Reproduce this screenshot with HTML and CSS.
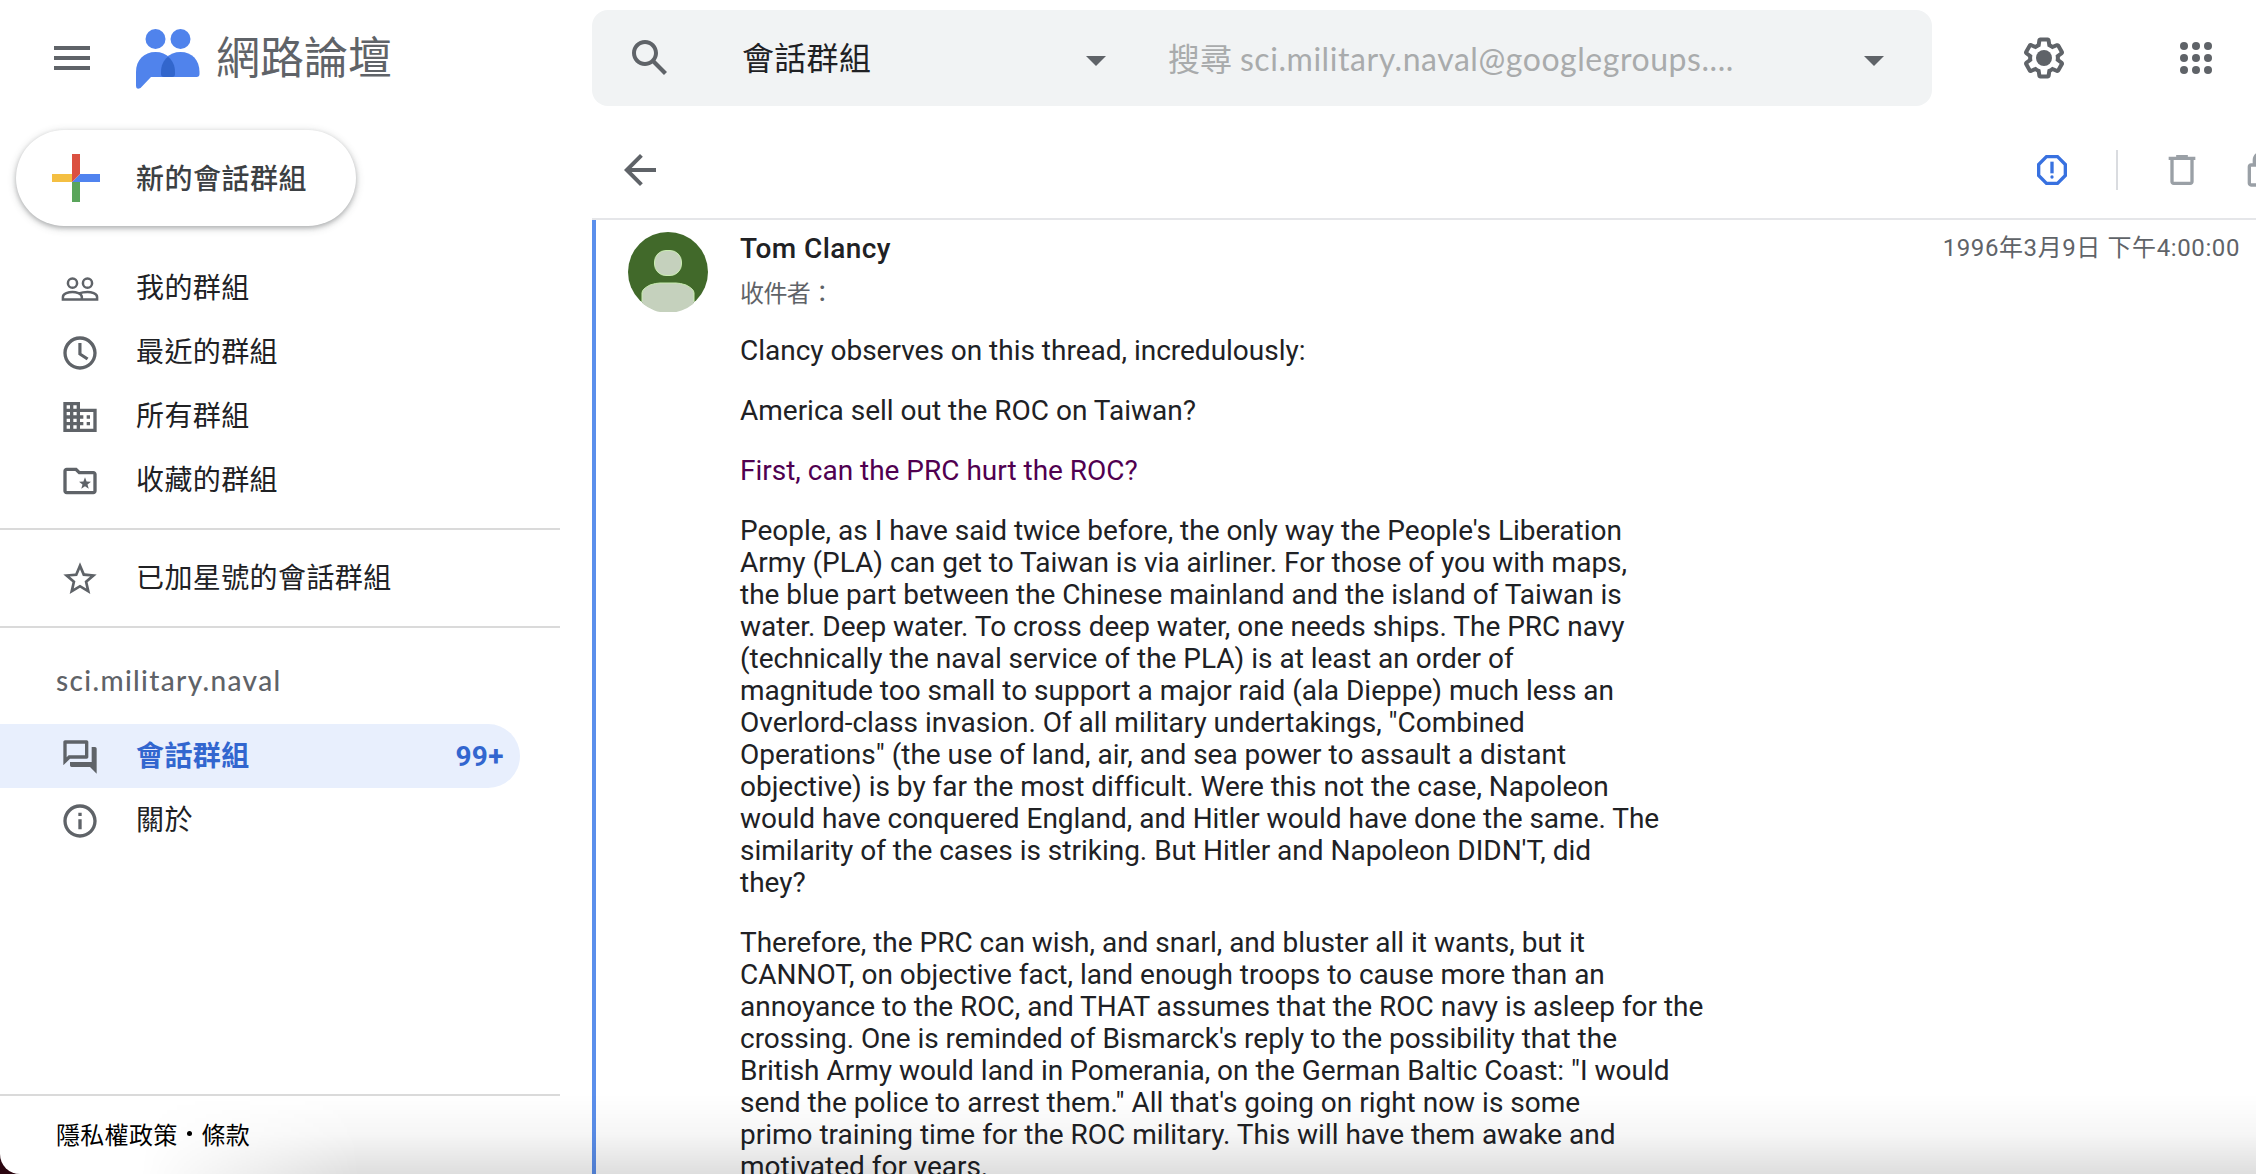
FILE: index.html
```html
<!DOCTYPE html>
<html lang="zh-Hant">
<head>
<meta charset="utf-8">
<title>網路論壇</title>
<link rel="stylesheet" href="styles.css">
</head>
<body>
<div class="app">
  <aside class="sidebar">
    <header class="brand">
      <svg class="icon48" viewBox="0 0 24 24"><path d="M3 18h18v-2H3v2zm0-5h18v-2H3v2zm0-7v2h18V6H3z"/></svg>
      <svg class="logo" viewBox="0 0 64 60">
        <circle cx="19.5" cy="10" r="10"/><circle cx="44.5" cy="10" r="10"/>
        <path d="M0 43C0 31 8 23 19.500 23S39 31 39 43v2q0 3-3 3H15L4.500 59Q0 61 0 57z"/>
        <path d="M25 43C25 31 33 23 44.500 23S63.500 31 63.500 43v2q0 3-3 3H28q-3 0-3-3z"/>
        <path class="overlap" d="M32 27.800C37 32 39 37 39 43v2q0 3-3 3h-8q-3 0-3-3v-2c0-6 2-11 7-15.200z"/>
      </svg>
      <h1 class="title">網路論壇</h1>
    </header>
    <button class="compose">
      <svg class="plus" viewBox="0 0 48 48">
        <path fill="#f4bf42" d="M0 20h20v8H0z"/><path fill="#5aa55b" d="M20 28h8v20h-8z"/>
        <path fill="#5083ef" d="M28 20h20v8H20z"/><path fill="#db5040" d="M20 0h8v20l-8 8z"/>
      </svg>
      <span>新的會話群組</span>
    </button>
    <nav class="nav">
      <a class="item"><svg class="icon40" viewBox="0 0 24 24"><g fill="none" stroke="#5f6368" stroke-width="1.500"><circle cx="7.500" cy="8.500" r="2.750"/><circle cx="16.500" cy="8.500" r="2.750"/><path d="M1.750 18.250v-1.500c0-2 3.500-3 5.750-3 2 0 5.600 1 5.600 3v1.500zM11.500 14.600c1.500-.6 3.500-.85 5-.85 2.250 0 5.750 1 5.750 3v1.500h-9.500"/></g></svg><span>我的群組</span></a>
      <a class="item"><svg class="icon40" viewBox="0 0 24 24"><path d="M11.990 2C6.470 2 2 6.480 2 12s4.470 10 9.990 10C17.520 22 22 17.520 22 12S17.520 2 11.990 2zM12 20c-4.420 0-8-3.580-8-8s3.580-8 8-8 8 3.580 8 8-3.580 8-8 8zm.9-14H11v7l5 3.400 1.100-1.600-4.200-2.600z"/></svg><span>最近的群組</span></a>
      <a class="item"><svg class="icon40" viewBox="0 0 24 24"><path d="M12 7V3H2v18h20V7H12zM6 19H4v-2h2v2zm0-4H4v-2h2v2zm0-4H4V9h2v2zm0-4H4V5h2v2zm4 12H8v-2h2v2zm0-4H8v-2h2v2zm0-4H8V9h2v2zm0-4H8V5h2v2zm10 12h-8v-2h2v-2h-2v-2h2v-2h-2V9h8v10zm-2-8h-2v2h2v-2zm0 4h-2v2h2v-2z"/></svg><span>所有群組</span></a>
      <a class="item"><svg class="icon40" viewBox="0 0 24 24"><path d="M20 6h-8l-2-2H4c-1.100 0-1.990.9-1.990 2L2 18c0 1.100.9 2 2 2h16c1.100 0 2-.9 2-2V8c0-1.100-.9-2-2-2zm0 12H4V6h5.170l2 2H20v10z"/><path d="M15 9.800l.95 2.500 2.650.1-2.100 1.650.75 2.600L15 15.150l-2.250 1.500.75-2.600-2.100-1.650 2.650-.1z"/></svg><span>收藏的群組</span></a>
    </nav>
    <nav class="nav starred">
      <a class="item"><svg class="icon40" viewBox="0 0 24 24"><path d="M22 9.240l-7.190-.62L12 2 9.190 8.630 2 9.240l5.460 4.730L5.820 21 12 17.270 18.180 21l-1.630-7.030L22 9.240zM12 15.400l-3.760 2.270 1-4.280-3.320-2.880 4.380-.38L12 6.100l1.710 4.040 4.380.38-3.320 2.880 1 4.280L12 15.400z"/></svg><span>已加星號的會話群組</span></a>
    </nav>
    <h2 class="group">sci.military.naval</h2>
    <nav>
      <a class="item active"><svg class="icon40" viewBox="0 0 24 24"><path d="M15 4v7H5.170L4 12.170V4h11m1-2H3c-.55 0-1 .45-1 1v14l4-4h10c.55 0 1-.45 1-1V3c0-.55-.45-1-1-1zm5 4h-2v9H6v2c0 .55.45 1 1 1h11l4 4V7c0-.55-.45-1-1-1z"/></svg><span>會話群組</span><span class="count">99+</span></a>
      <a class="item"><svg class="icon40" viewBox="0 0 24 24"><path d="M11 7h2v2h-2zm0 4h2v6h-2zm1-9C6.480 2 2 6.480 2 12s4.480 10 10 10 10-4.480 10-10S17.520 2 12 2zm0 18c-4.410 0-8-3.590-8-8s3.590-8 8-8 8 3.590 8 8-3.590 8-8 8z"/></svg><span>關於</span></a>
    </nav>
    <footer class="legal">隱私權政策<i class="dot"></i>條款</footer>
  </aside>

  <main class="main">
    <div class="topbar">
      <div class="search">
        <svg class="icon48" viewBox="0 0 24 24"><path d="M20.490 19l-5.730-5.730C15.530 12.200 16 10.910 16 9.500 16 5.910 13.090 3 9.500 3S3 5.910 3 9.500 5.910 16 9.500 16c1.410 0 2.700-.47 3.770-1.240L19 20.490 20.490 19zM5 9.500C5 7.010 7.010 5 9.500 5S14 7.010 14 9.500 11.990 14 9.500 14 5 11.990 5 9.500z"/></svg>
        <span class="scope">會話群組</span>
        <svg class="caret" viewBox="0 0 20 10"><path d="M0 0h20L10 10z"/></svg>
        <span class="query">搜尋 <span class="address">sci.military.naval@googlegroups....</span></span>
        <svg class="caret" viewBox="0 0 20 10"><path d="M0 0h20L10 10z"/></svg>
      </div>
      <svg class="icon48 gear" viewBox="0 0 24 24"><path d="M13.850 22.250h-3.700c-.74 0-1.360-.54-1.450-1.270l-.27-1.890c-.27-.14-.53-.29-.79-.46l-1.800.72c-.7.26-1.470-.03-1.810-.65L2.200 15.530c-.35-.66-.2-1.440.36-1.880l1.530-1.190c-.01-.15-.02-.3-.02-.46 0-.15.01-.31.02-.46l-1.520-1.190c-.59-.45-.74-1.260-.37-1.880l1.850-3.190c.34-.62 1.110-.9 1.790-.63l1.810.73c.26-.17.52-.32.78-.46l.27-1.910c.09-.7.71-1.250 1.440-1.250h3.700c.74 0 1.360.54 1.450 1.270l.27 1.890c.27.14.53.29.79.46l1.800-.72c.71-.26 1.480.03 1.820.65l1.840 3.180c.36.66.2 1.440-.36 1.880l-1.520 1.190c.01.15.02.3.02.46s-.01.31-.02.46l1.520 1.190c.56.45.72 1.230.37 1.860l-1.860 3.220c-.34.62-1.110.9-1.800.63l-1.800-.72c-.26.17-.52.32-.78.46l-.27 1.910c-.1.68-.72 1.220-1.460 1.220zm-3.230-2h2.760l.37-2.550.53-.22c.44-.18.88-.44 1.340-.78l.45-.34 2.380.96 1.380-2.400-2.030-1.580.07-.56c.03-.26.06-.51.06-.78s-.03-.53-.06-.78l-.07-.56 2.030-1.580-1.390-2.400-2.390.96-.45-.35c-.42-.32-.87-.58-1.330-.77l-.52-.22-.37-2.550h-2.760l-.37 2.550-.53.21c-.44.19-.88.44-1.340.79l-.45.33-2.380-.95-1.390 2.390 2.030 1.580-.07.56c-.03.26-.06.53-.06.79s.02.53.06.78l.07.56-2.030 1.580 1.380 2.400 2.390-.96.45.35c.43.33.86.58 1.330.77l.53.22.38 2.550z"/><circle cx="12" cy="12" r="4"/></svg>
      <svg class="apps" viewBox="0 0 32 32"><circle cx="4" cy="4" r="4"/><circle cx="16" cy="4" r="4"/><circle cx="28" cy="4" r="4"/><circle cx="4" cy="16" r="4"/><circle cx="16" cy="16" r="4"/><circle cx="28" cy="16" r="4"/><circle cx="4" cy="28" r="4"/><circle cx="16" cy="28" r="4"/><circle cx="28" cy="28" r="4"/></svg>
    </div>
    <div class="toolbar">
      <svg class="icon48 back" viewBox="0 0 24 24"><path d="M20 11H7.830l5.590-5.590L12 4l-8 8 8 8 1.410-1.410L7.830 13H20v-2z"/></svg>
      <svg class="icon40 report" viewBox="0 0 24 24"><path d="M15.730 3H8.270L3 8.270v7.460L8.270 21h7.460L21 15.730V8.270L15.730 3zM19 14.900L14.900 19H9.100L5 14.900V9.100L9.100 5h5.800L19 9.100v5.800z"/><circle cx="12" cy="16.200" r="1"/><path d="M11 7h2v7h-2z"/></svg>
      <span class="rule"></span>
      <svg class="icon40 trash" viewBox="0 0 24 24"><path d="M15.500 4V3h-7v1H4v2h1v13c0 1.100.9 2 2 2h10c1.100 0 2-.9 2-2V6h1V4zM17 19H7V6h10z"/></svg>
      <svg class="icon40 lock" viewBox="0 0 24 24"><path d="M18 8h-1V6c0-2.760-2.240-5-5-5S7 3.240 7 6v2H6c-1.100 0-2 .9-2 2v10c0 1.100.9 2 2 2h12c1.100 0 2-.9 2-2V10c0-1.100-.9-2-2-2zM9 6c0-1.660 1.340-3 3-3s3 1.340 3 3v2H9V6zm9 14H6V10h12v10z"/></svg>
    </div>
    <article class="message">
      <svg class="avatar" viewBox="0 0 80 80"><circle cx="40" cy="40" r="40" fill="#41692a"/><g fill="#c5d1bd" stroke="#c9ecb0"><rect x="26.500" y="18.500" width="27" height="25" rx="11.500"/><path d="M14 70v-9q0-4 8-8 6-2 10-2h16q4 0 10 2 8 4 8 8v9" /></g><path fill="#c5d1bd" d="M14.500 69h51v2.800A40 40 0 0 1 14.500 71.500z"/></svg>
      <div class="content">
        <div class="meta"><span class="author">Tom Clancy</span><time class="date">1996年3月9日 下午4:00:00</time></div>
        <div class="to">收件者：</div>
        <div class="body">
          <p>Clancy observes on this thread, incredulously:</p>
          <p>America sell out the ROC on Taiwan?</p>
          <p class="quoted">First, can the PRC hurt the ROC?</p>
          <p>People, as I have said twice before, the only way the People's Liberation<br>Army (PLA) can get to Taiwan is via airliner. For those of you with maps,<br>the blue part between the Chinese mainland and the island of Taiwan is<br>water. Deep water. To cross deep water, one needs ships. The PRC navy<br>(technically the naval service of the PLA) is at least an order of<br>magnitude too small to support a major raid (ala Dieppe) much less an<br>Overlord-class invasion. Of all military undertakings, "Combined<br>Operations" (the use of land, air, and sea power to assault a distant<br>objective) is by far the most difficult. Were this not the case, Napoleon<br>would have conquered England, and Hitler would have done the same. The<br>similarity of the cases is striking. But Hitler and Napoleon DIDN'T, did<br>they?</p>
          <p>Therefore, the PRC can wish, and snarl, and bluster all it wants, but it<br>CANNOT, on objective fact, land enough troops to cause more than an<br>annoyance to the ROC, and THAT assumes that the ROC navy is asleep for the<br>crossing. One is reminded of Bismarck's reply to the possibility that the<br>British Army would land in Pomerania, on the German Baltic Coast: "I would<br>send the police to arrest them." All that's going on right now is some<br>primo training time for the ROC military. This will have them awake and<br>motivated for years.</p>
        </div>
      </div>
    </article>
  </main>
  <div class="shade"></div>
</div>
</body>
</html>
```
FILE: styles.css
```css
* { box-sizing: border-box; }
html { background: #2b0610; }
body {
  margin: 0;
  height: 1174px;
  overflow: hidden;
  background: #2b0610;
  color: #202124;
  font-family: Roboto, "Noto Sans CJK TC", sans-serif;
  font-size: 28px;
  letter-spacing: 0.4px;
}
.app {
  position: relative;
  display: flex;
  height: 1174px;
  overflow: hidden;
  background: #fff;
  border-bottom-left-radius: 20px;
}
svg { flex: none; display: block; fill: #5f6368; }
h1, h2, p { margin: 0; font-weight: 400; }
.icon48 { width: 48px; height: 48px; }
.icon40 { width: 40px; height: 40px; }

/* Sidebar */
.sidebar { flex: none; width: 592px; display: flex; flex-direction: column; }
.brand { display: flex; align-items: center; height: 116px; padding-left: 48px; }
.logo { width: 64px; height: 60px; margin: 2px 0 0 40px; fill: #5083ec; }
.logo .overlap { fill: #3266cc; }
.title { margin: 2px 0 0 16px; font-size: 44px; line-height: 60px; letter-spacing: 0; color: #5f6368; }
.compose {
  display: flex;
  align-items: center;
  width: 340px;
  height: 96px;
  margin: 14px 0 30px 16px;
  padding: 0 0 0 36px;
  gap: 36px;
  border: 0;
  border-radius: 48px;
  background: #fff;
  box-shadow: 0 2px 4px rgba(60,64,67,.3), 0 2px 7px 2px rgba(60,64,67,.15);
  color: #3c4043;
  font: 500 28px Roboto, "Noto Sans CJK TC", sans-serif;
  letter-spacing: .5px;
}
.compose span { margin-top: -2px; }
.plus { width: 48px; height: 48px; }
.nav { width: 560px; padding-bottom: 16px; border-bottom: 2px solid #dadada; }
.starred { padding-top: 16px; }
.item { display: flex; align-items: center; height: 64px; width: 520px; padding: 1px 16px 0 60px; }
.item span { margin-left: 36px; padding-top: 1px; line-height: 40px; }
.item .count { margin-left: auto; font-weight: 700; }
.active { background: #e8effd; border-radius: 0 32px 32px 0; color: #3266cf; font-weight: 700; }
.group {
  height: 96px;
  padding-left: 56px;
  line-height: 104px;
  font-family: Lato, sans-serif;
  font-size: 28px;
  font-weight: 500;
  letter-spacing: 1.35px;
  color: #5f6368;
}
.legal {
  display: flex;
  align-items: center;
  width: 560px;
  height: 80px;
  margin-top: auto;
  padding: 0 0 3px 56px;
  border-top: 2px solid #dadada;
  font-size: 24px;
  letter-spacing: .3px;
  color: #000;
}
.dot { width: 5px; height: 5px; margin: 0 10px 0 9px; border-radius: 50%; background: #000; }

/* Header and search */
.main { flex: 1; min-width: 0; }
.topbar { display: flex; align-items: center; height: 116px; }
.search {
  display: flex;
  align-items: center;
  width: 1340px;
  height: 96px;
  padding-left: 34px;
  border-radius: 16px;
  background: #f1f3f4;
  font-size: 32px;
}
.scope { width: 344px; margin: -5px 0 0 68px; letter-spacing: .3px; }
.caret { width: 20px; height: 10px; margin-top: 5px; }
.query { width: 758px; margin-top: -3px; padding-left: 62px; color: #a9abac; letter-spacing: 0; white-space: nowrap; }
.address { font-family: Lato, sans-serif; letter-spacing: .55px; }
.gear { margin-left: 88px; }
.apps { width: 32px; height: 32px; margin-left: 112px; }
.toolbar { display: flex; align-items: center; height: 104px; padding: 6px 0 0 24px; border-bottom: 2px solid #e5e6e9; }
.report { margin-left: 1368px; fill: #3871e0; }
.rule { flex: none; width: 2px; height: 40px; margin: 0 44px; background: #dadce0; }
.trash, .lock { fill: #9aa0a6; }
.lock { margin-left: 39px; }

/* Message */
.message { display: flex; height: 954px; overflow: hidden; padding: 12px 16px 0 32px; border-left: 4px solid #5b8fec; }
.avatar { width: 80px; height: 80px; }
.content { flex: 1; margin-left: 32px; }
.meta { display: flex; justify-content: space-between; height: 40px; line-height: 34px; white-space: nowrap; }
.author { font-weight: 500; letter-spacing: .4px; }
.date { font-size: 24px; line-height: 33px; letter-spacing: .6px; color: #5f6368; }
.to { height: 63px; font-size: 24px; line-height: 44px; letter-spacing: -.6px; color: #5f6368; }
.body { line-height: 32px; letter-spacing: -.01px; white-space: nowrap; }
.body p { margin-bottom: 28px; }
.quoted { color: #500050; }

/* Shadow along the lower window edge */
.shade {
  position: absolute;
  left: 0;
  right: 0;
  bottom: 0;
  height: 80px;
  pointer-events: none;
  background: linear-gradient(to bottom, rgba(0,0,0,0), rgba(0,0,0,.035) 50%, rgba(0,0,0,.13));
  -webkit-mask-image: linear-gradient(to right, transparent 140px, #000 360px);
  mask-image: linear-gradient(to right, transparent 140px, #000 360px);
}
```
